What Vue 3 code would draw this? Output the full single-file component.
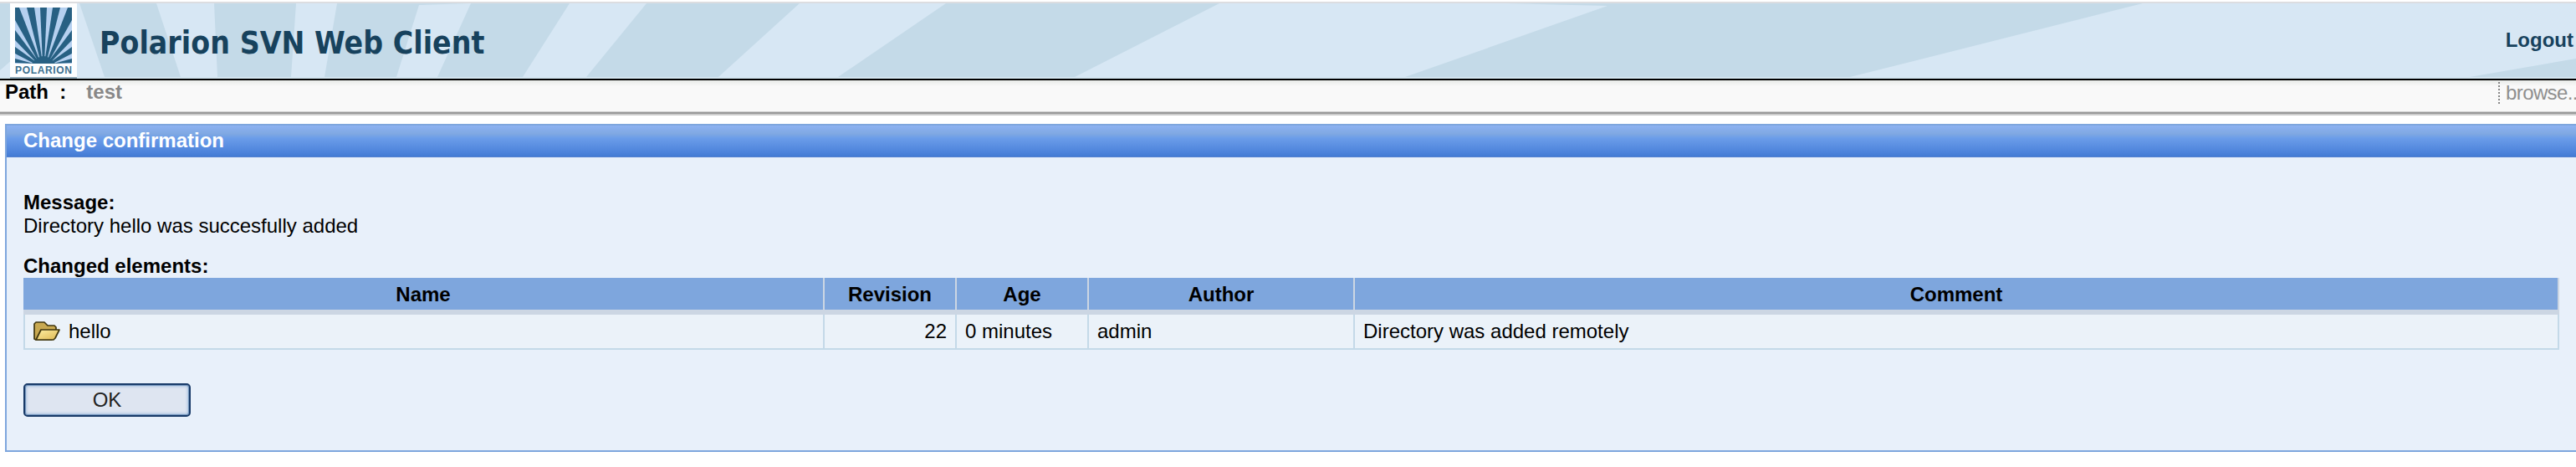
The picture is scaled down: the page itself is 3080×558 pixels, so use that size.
<script setup>
const columns = ['Name', 'Revision', 'Age', 'Author', 'Comment']
const rows = [
  { name: 'hello', revision: 22, age: '0 minutes', author: 'admin', comment: 'Directory was added remotely' },
]
</script>

<template>
  <div class="page">
    <header class="banner">
      <svg class="rays" viewBox="0 4 3080 90" preserveAspectRatio="none" aria-hidden="true">
        <g fill="#d7e7f4">
          <polygon points="92,4 95,4 125,92 0,92 0,84" />
          <polygon points="187,4 256,4 260,92 216,92" />
          <polygon points="354,4 403,4 388,92 348,92" />
          <polygon points="501,6 563,4 523,92 474,92" />
          <polygon points="681,4 773,4 701,92 625,92" />
          <polygon points="956,4 1131,4 1002,92 859,92" />
          <polygon points="1458,4 1800,4 1922,7 1680,92 1285,92" />
          <polygon points="2562,4 3080,4 3080,70 2953,92 2212,92" />
        </g>
        <rect x="0" y="92" width="3080" height="2" fill="#d3e5f0" />
      </svg>
      <svg class="logo" viewBox="0 0 80 90" aria-hidden="true">
        <rect width="80" height="88" fill="#fdfeff" />
        <rect y="88" width="80" height="2" fill="#8fa9b8" />
        <rect x="6" y="5" width="68" height="67" fill="#b5d0f0" />
        <g fill="#276083">
          <polygon points="36,5 44,5 41,72 39,72" />
          <polygon points="20,5 29,5 39,72 37,72" />
          <polygon points="51,5 60,5 43,72 41,72" />
          <polygon points="6,5 11,5 37,72 35,72 6,20" />
          <polygon points="74,5 69,5 43,72 45,72 74,20" />
          <polygon points="6,32 6,44 33,72 36,72" />
          <polygon points="74,32 74,44 47,72 44,72" />
          <polygon points="6,52 6,60 29,72 34,72" />
          <polygon points="74,52 74,60 51,72 46,72" />
          <polygon points="6,66 6,71 28,72" />
          <polygon points="74,66 74,71 52,72" />
          <path d="M26 72 Q40 54 54 72Z" />
        </g>
        <text x="6" y="83.5" textLength="68" lengthAdjust="spacing">POLARION</text>
      </svg>
      <h1>Polarion SVN Web Client</h1>
      <a class="logout">Logout</a>
    </header>

    <nav class="path">
      <span class="label">Path&nbsp; :</span>
      <span class="crumb">test</span>
      <span class="browse">browse..</span>
    </nav>

    <section class="panel">
      <h2>Change confirmation</h2>
      <div class="content">
        <strong>Message:</strong>
        <p>Directory hello was succesfully added</p>
        <strong>Changed elements:</strong>
        <div class="table">
          <div class="row head">
            <div v-for="c in columns" :key="c" class="cell">{{ c }}</div>
          </div>
          <div v-for="r in rows" :key="r.name" class="row">
            <div class="cell">
              <svg class="folder" width="32" height="24" viewBox="0 0 32 24" aria-hidden="true">
                <defs>
                  <linearGradient id="front" x1="0" y1="0" x2="1" y2="1">
                    <stop offset="0" stop-color="#fff0a4" />
                    <stop offset="1" stop-color="#dcb650" />
                  </linearGradient>
                </defs>
                <path d="M1 21V3L3 1H13L17 5H25L27 7V11L22 22H3Z" fill="#c8a951" stroke="#3f360f" stroke-width="1.7" stroke-linejoin="round" />
                <path d="M3 22L9 10H31L26 20L24 22Z" fill="url(#front)" stroke="#40370f" stroke-width="1.7" stroke-linejoin="round" />
              </svg>
              <span>{{ r.name }}</span>
            </div>
            <div class="cell num">{{ r.revision }}</div>
            <div class="cell">{{ r.age }}</div>
            <div class="cell">{{ r.author }}</div>
            <div class="cell">{{ r.comment }}</div>
          </div>
        </div>
        <button type="button">OK</button>
      </div>
    </section>
  </div>
</template>

<style>
body {
  background: #fff;
  overflow: hidden;
}
</style>

<style scoped>
.page {
  width: 3080px;
  height: 558px;
  padding-top: 2px;
  box-sizing: border-box;
  overflow: hidden;
  font: 24px/28px "Liberation Sans", Arial, sans-serif;
  color: #000;
}
.banner {
  position: relative;
  display: flex;
  height: 94px;
  box-sizing: border-box;
  border-top: 2px solid #dcdde0;
  border-bottom: 2px solid #000;
  background: #c4dae8;
}
.rays {
  position: absolute;
  inset: 0;
  width: 100%;
  height: 90px;
}
.logo {
  position: relative;
  width: 80px;
  height: 90px;
  margin-left: 12px;
}
.logo text {
  font: bold 12px "Liberation Sans", sans-serif;
  fill: #3c6f8e;
}
h1 {
  position: relative;
  margin: 1px 0 0 27px;
  font: bold 37px/93px "DejaVu Sans Condensed", "DejaVu Sans", Tahoma, sans-serif;
  letter-spacing: 0.06px;
  color: #17425d;
  white-space: nowrap;
}
.logout {
  position: relative;
  margin: 30px 3px 0 auto;
  font-weight: bold;
  color: #17425d;
}
.path {
  display: flex;
  height: 42px;
  box-sizing: border-box;
  padding-left: 6px;
  background: linear-gradient(#e9ebe9, #f9f9f9 7px, #f9f9f9 37px, #cfcfcf 37px 38px, #999 38px 40px, #cdcdcd 40px);
  font-weight: bold;
}
.crumb {
  margin-left: 24px;
  color: #888;
}
.label,
.crumb {
  line-height: 28px;
}
.browse {
  width: 84px;
  height: 26px;
  margin: 2px 0 0 auto;
  padding-left: 7px;
  border-left: 2px dotted #888;
  font-weight: normal;
  line-height: 25px;
  letter-spacing: -0.6px;
  color: #8f8f8f;
  white-space: nowrap;
}
.panel {
  height: 392px;
  box-sizing: border-box;
  margin: 10px 0 0 6px;
  border: solid #7ea6dd;
  border-width: 2px 0 2px 2px;
  background: #e8f0fa;
}
h2 {
  height: 38px;
  box-sizing: border-box;
  margin: 0;
  padding-left: 20px;
  border-bottom: 1px solid #5582d0;
  background: linear-gradient(#8db2f2, #7fa8e2 10px, #6b9de9 15px, #4d83db 32px, #437bd3);
  font: bold 24px/36px "Liberation Sans", Arial, sans-serif;
  color: #fff;
}
.content {
  padding: 40px 20px 0;
}
.content strong {
  display: block;
}
p {
  margin: 0 0 20px;
}
.table {
  width: 3032px;
}
.row {
  display: grid;
  grid-template-columns: 958px 158px 158px 318px 1440px;
  height: 42px;
}
.cell {
  display: flex;
  align-items: center;
  box-sizing: border-box;
  padding: 0 10px;
  border-right: 2px solid #c4d9e8;
  border-bottom: 2px solid #c4d9e8;
  background: #ebf2f9;
}
.cell:first-child {
  border-left: 2px solid #c4d9e8;
}
.cell.num {
  justify-content: flex-end;
}
.head {
  height: 44px;
}
.head .cell {
  justify-content: center;
  padding-top: 2px;
  border-color: #ccd6e3;
  border-bottom-width: 6px;
  background: #7ea6dd;
  font-weight: bold;
}
.head .cell:first-child {
  border-left: 0;
}
.folder {
  margin-right: 10px;
}
button {
  display: block;
  width: 200px;
  height: 40px;
  margin-top: 40px;
  padding: 0;
  border: 2px solid #183a68;
  border-radius: 5px;
  background: #dee5f1;
  box-shadow: inset 0 0 0 1px #7395bd, inset 0 0 3px 2px #a9c2df;
  font: 24px/34px "Liberation Sans", Arial, sans-serif;
  color: #222;
}
</style>
